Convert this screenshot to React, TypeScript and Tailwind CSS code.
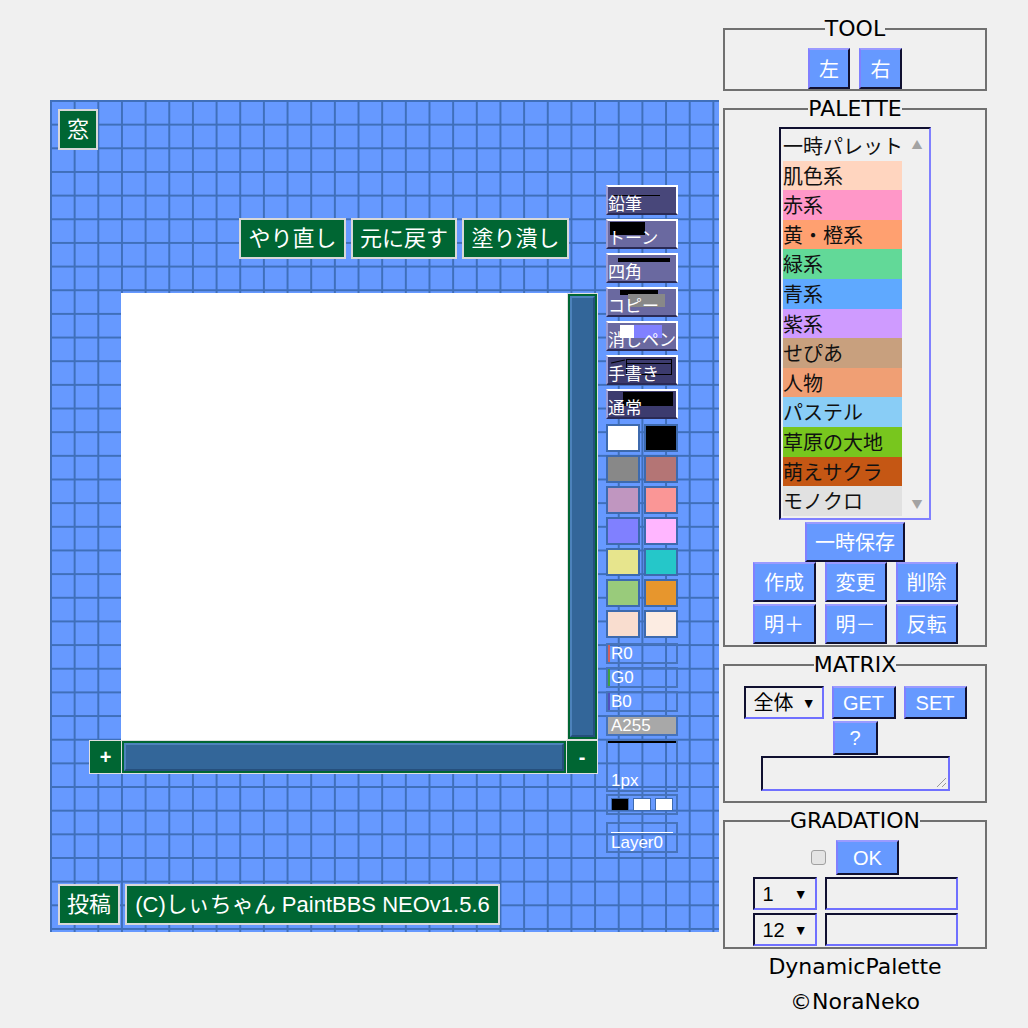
import React from 'react';

const swatches: [string, string][] = [
  ['#ffffff', '#000000'],
  ['#888888', '#b47575'],
  ['#c096c0', '#fa9696'],
  ['#8080ff', '#ffb6ff'],
  ['#e7e58d', '#25c7c9'],
  ['#99cb7b', '#e7962d'],
  ['#f9ddcf', '#fcece2'],
];

const palettes: { name: string; bg: string }[] = [
  { name: '肌色系', bg: '#ffd5bf' },
  { name: '赤系', bg: '#ff97c8' },
  { name: '黄・橙系', bg: '#ffa070' },
  { name: '緑系', bg: '#62d998' },
  { name: '青系', bg: '#5fa9ff' },
  { name: '紫系', bg: '#cf9bff' },
  { name: 'せぴあ', bg: '#c8a07e' },
  { name: '人物', bg: '#f09f74' },
  { name: 'パステル', bg: '#89cdf6' },
  { name: '草原の大地', bg: '#78c61e' },
  { name: '萌えサクラ', bg: '#c55714' },
  { name: 'モノクロ', bg: '#e1e1e1' },
];

const greenBtn =
  'bg-[#006633] border-2 border-[#d8d8d8] text-white text-[22px] leading-none flex items-center justify-center';

const blueBtn =
  'bg-[#6699ff] text-white border-2 border-t-[#9a9aff] border-l-[#8080ff] border-r-[#101030] border-b-[#101030] flex items-center justify-center leading-none';

const field =
  'bg-[#f0f0f0] border-2 border-t-[#101030] border-l-[#101030] border-r-[#7070ff] border-b-[#7070ff]';

function ToolButton({ label, bg, children }: { label: string; bg: string; children?: React.ReactNode }) {
  return (
    <div
      className={`relative h-[30px] w-[72px] border-2 border-t-white border-r-white border-l-[#9c9cd4] border-b-[#2a2a55] flex items-end ${bg}`}
    >
      {children}
      <span className="relative text-white text-[17px] leading-none whitespace-nowrap">{label}</span>
    </div>
  );
}

function Fieldset({ title, className, children }: { title: string; className?: string; children: React.ReactNode }) {
  return (
    <fieldset className={`border-2 border-[#707070] ${className ?? ''}`}>
      <legend className="mx-auto px-0 text-[22px] leading-[26px] text-black">{title}</legend>
      {children}
    </fieldset>
  );
}

export default function App() {
  return (
    <div className="min-h-screen bg-[#f0f0f0] flex items-start pl-[50px] font-['Liberation_Sans','Noto_Sans_CJK_JP',sans-serif]">
      {/* paint area */}
      <div className="mt-[100px] w-[669px] h-[832px] flex bg-[#6699ff] bg-[linear-gradient(to_right,#3f6fba_0_2px,transparent_2px),linear-gradient(to_bottom,#3f6fba_0_2px,transparent_2px)] bg-[length:23.67px_23.67px]">
        <div className="w-[556px] flex flex-col">
          <div className="pt-[9px] pl-[8px]">
            <div className={`${greenBtn} w-[40px] h-[41px]`}>窓</div>
          </div>

          <div className="mt-[68px] flex justify-end gap-[5px] pr-[37px]">
            <div className={`${greenBtn} w-[107px] h-[41px]`}>やり直し</div>
            <div className={`${greenBtn} w-[106px] h-[41px]`}>元に戻す</div>
            <div className={`${greenBtn} w-[107px] h-[41px]`}>塗り潰し</div>
          </div>

          {/* canvas + scrollbars */}
          <div className="mt-[34px] ml-[39px] w-[509px] flex flex-col">
            <div className="flex">
              <div className="w-[32px]" />
              <div className="w-[446px] h-[447px] bg-white" />
              <div className="w-[31px] h-[447px] border border-[#e0e0e0] bg-[#006633] p-[2px]">
                <div className="h-full bg-[#336699] border-2 border-t-[#4d82bb] border-l-[#4d82bb] border-r-[#264f7c] border-b-[#264f7c]" />
              </div>
            </div>
            <div className="flex h-[34px] border border-[#e0e0e0] bg-[#006633]">
              <div className="w-[31px] flex items-center justify-center text-white text-[20px] font-bold leading-none">+</div>
              <div className="w-[446px] border-x border-[#e0e0e0] p-[2px]">
                <div className="h-full bg-[#336699] border-2 border-t-[#4d82bb] border-l-[#4d82bb] border-r-[#264f7c] border-b-[#264f7c]" />
              </div>
              <div className="flex-1 flex items-center justify-center text-white text-[20px] font-bold leading-none">-</div>
            </div>
          </div>

          <div className="mt-auto mb-[7px] pl-[8px] flex gap-[5px]">
            <div className={`${greenBtn} w-[62px] h-[41px]`}>投稿</div>
            <div className={`${greenBtn} w-[375px] h-[41px]`}>(C)しぃちゃん PaintBBS NEOv1.5.6</div>
          </div>
        </div>

        {/* tools */}
        <div className="pt-[85px] w-[72px] flex flex-col">
          <div className="flex flex-col gap-[4px]">
            <ToolButton label="鉛筆" bg="bg-[#48477a]">
              <div className="absolute left-[4px] top-[8px] w-[48px] h-[1px] bg-black" />
            </ToolButton>
            <ToolButton label="トーン" bg="bg-[#6a69a0]">
              <div className="absolute left-[2px] top-[1px] w-[35px] h-[13px] bg-black" />
            </ToolButton>
            <ToolButton label="四角" bg="bg-[#6a69a0]">
              <div className="absolute left-[10px] top-[3px] w-[52px] h-[4px] bg-black" />
            </ToolButton>
            <ToolButton label="コピー" bg="bg-[#6a69a0]">
              <div className="absolute left-[12px] top-[1px] w-[38px] h-[5px] bg-black" />
              <div className="absolute left-[20px] top-[5px] w-[37px] h-[13px] bg-[#888888]" />
            </ToolButton>
            <ToolButton label="消しペン" bg="bg-[#6a69a0]">
              <div className="absolute left-[12px] top-[2px] w-[14px] h-[13px] bg-white" />
              <div className="absolute left-[26px] top-[2px] w-[28px] h-[13px] bg-[#8080ff]" />
            </ToolButton>
            <ToolButton label="手書き" bg="bg-[#3c3b6e]">
              <div className="absolute left-[3px] top-[4px] w-[14px] h-[1px] bg-black -rotate-12" />
              <div className="absolute left-[18px] top-[2px] w-[46px] h-[16px] border border-black" />
              <div className="absolute left-[18px] top-[6px] w-[46px] h-[1px] bg-black" />
            </ToolButton>
            <ToolButton label="通常" bg="bg-[#3c3b6e]">
              <div className="absolute left-[15px] top-[1px] w-[50px] h-[14px] bg-black" />
            </ToolButton>
          </div>

          <div className="mt-[5px] flex flex-col gap-[3px]">
            {swatches.map(([a, b], i) => (
              <div key={i} className="flex gap-[4px]">
                <div className="w-[34px] h-[28px] border-2 border-[#3d6aae]" style={{ backgroundColor: a }} />
                <div className="w-[34px] h-[28px] border-2 border-[#3d6aae]" style={{ backgroundColor: b }} />
              </div>
            ))}
          </div>

          <div className="mt-[5px] flex flex-col gap-[3px] text-white text-[17px]">
            <div className="relative h-[21px] border-2 border-[#4673bb] flex items-center">
              <div className="absolute left-0 top-0 w-[2px] h-full bg-[#d06060]" />
              <span className="pl-[3px] leading-none">R0</span>
            </div>
            <div className="relative h-[21px] border-2 border-[#4673bb] flex items-center">
              <div className="absolute left-0 top-0 w-[2px] h-full bg-[#40a040]" />
              <span className="pl-[3px] leading-none">G0</span>
            </div>
            <div className="relative h-[21px] border-2 border-[#4673bb] flex items-center">
              <div className="absolute left-0 top-0 w-[2px] h-full bg-[#5050c0]" />
              <span className="pl-[3px] leading-none">B0</span>
            </div>
            <div className="h-[21px] border-2 border-[#4673bb] bg-[#a8a8a8] flex items-center">
              <span className="pl-[3px] leading-none">A255</span>
            </div>
            <div className="h-[53px] border-2 border-[#4673bb] flex flex-col justify-between">
              <div className="h-[2px] bg-black" />
              <span className="pl-[3px] pb-[1px] leading-none">1px</span>
            </div>
          </div>
          <div className="mt-[2px] h-[21px] border-2 border-[#4673bb] flex items-center gap-[4px] pl-[3px]">
            <div className="w-[18px] h-[13px] bg-black border border-[#3d6aae]" />
            <div className="w-[18px] h-[13px] bg-white border border-[#3d6aae]" />
            <div className="w-[18px] h-[13px] bg-white border border-[#3d6aae]" />
          </div>
          <div className="mt-[7px] h-[31px] border-2 border-[#4673bb] flex flex-col justify-end text-white text-[17px]">
            <div className="mx-[3px] mb-[1px] h-[1px] bg-white" />
            <span className="pl-[3px] leading-none">Layer0</span>
          </div>
        </div>
      </div>

      {/* dynamic palette */}
      <div className="ml-[4px] mt-[16px] w-[264px] flex flex-col font-['DejaVu_Sans','Noto_Sans_CJK_JP',sans-serif]">
        <Fieldset title="TOOL" className="pt-[6px]">
          <div className="flex justify-center gap-[9px] font-['Noto_Sans_CJK_JP',sans-serif]">
            <div className={`${blueBtn} w-[42px] h-[41px] text-[20px]`}>左</div>
            <div className={`${blueBtn} w-[43px] h-[41px] text-[20px]`}>右</div>
          </div>
        </Fieldset>

        <Fieldset title="PALETTE" className="mt-[5px] pt-[5px] pb-[1px]">
          <div className="flex flex-col items-center font-['Noto_Sans_CJK_JP',sans-serif]">
            <div className="w-[152px] h-[393px] flex border-2 border-t-[#101030] border-l-[#101030] border-r-[#8080ff] border-b-[#8080ff] bg-[#f0f0f0] pl-[2px] pt-[2px]">
              <div className="w-[119px] flex flex-col text-[20px] text-[#111] leading-[29.6px] whitespace-nowrap">
                <div className="h-[29.6px]">一時パレット</div>
                {palettes.map((p) => (
                  <div key={p.name} className="h-[29.6px]" style={{ backgroundColor: p.bg }}>
                    {p.name}
                  </div>
                ))}
              </div>
              <div className="flex-1 flex flex-col items-center justify-between py-[8px] pl-[3px] text-[11px] text-[#a3a3a3] leading-none">
                <span>▲</span>
                <span>▼</span>
              </div>
            </div>
            <div className={`${blueBtn} mt-[2px] w-[100px] h-[40px] text-[20px]`}>一時保存</div>
            <div className="flex gap-[9px] text-[20px]">
              <div className={`${blueBtn} w-[63px] h-[40px]`}>作成</div>
              <div className={`${blueBtn} w-[62px] h-[40px]`}>変更</div>
              <div className={`${blueBtn} w-[62px] h-[40px]`}>削除</div>
            </div>
            <div className="mt-[2px] flex gap-[9px] text-[20px]">
              <div className={`${blueBtn} w-[63px] h-[40px]`}>明＋</div>
              <div className={`${blueBtn} w-[62px] h-[40px]`}>明－</div>
              <div className={`${blueBtn} w-[62px] h-[40px]`}>反転</div>
            </div>
          </div>
        </Fieldset>

        <Fieldset title="MATRIX" className="mt-[5px] pt-[8px] pb-[10px]">
          <div className="flex flex-col items-center font-['Liberation_Sans','Noto_Sans_CJK_JP',sans-serif]">
            <div className="flex gap-[8px]">
              <div className={`${field} w-[80px] h-[33px] flex items-center justify-between pl-[8px] pr-[6px] text-[20px] text-black`}>
                <span className="leading-none">全体</span>
                <span className="text-[14px] leading-none">▼</span>
              </div>
              <div className={`${blueBtn} w-[64px] h-[33px] text-[20px]`}>GET</div>
              <div className={`${blueBtn} w-[63px] h-[33px] text-[20px]`}>SET</div>
            </div>
            <div className={`${blueBtn} mt-[2px] w-[45px] h-[34px] text-[20px]`}>?</div>
            <div className={`${field} relative mt-[1px] w-[189px] h-[35px]`}>
              <svg className="absolute right-[1px] bottom-[1px]" width="12" height="12" viewBox="0 0 12 12">
                <line x1="11" y1="2" x2="2" y2="11" stroke="#999" strokeWidth="1" />
                <line x1="11" y1="7" x2="7" y2="11" stroke="#999" strokeWidth="1" />
              </svg>
            </div>
          </div>
        </Fieldset>

        <Fieldset title="GRADATION" className="mt-[5px] pt-[6px] pb-[1px]">
          <div className="flex flex-col items-center font-['Liberation_Sans','Noto_Sans_CJK_JP',sans-serif]">
            <div className="flex items-center gap-[10px]">
              <div className="w-[15px] h-[15px] rounded-[3px] border border-[#a0a0a0] bg-[#e4e4e4]" />
              <div className={`${blueBtn} w-[63px] h-[35px] text-[20px]`}>OK</div>
            </div>
            <div className="mt-[2px] flex gap-[8px]">
              <div className={`${field} w-[64px] h-[33px] flex items-center justify-between pl-[8px] pr-[7px] text-[20px] text-black`}>
                <span className="leading-none">1</span>
                <span className="text-[14px] leading-none">▼</span>
              </div>
              <div className={`${field} w-[133px] h-[33px]`} />
            </div>
            <div className="mt-[3px] flex gap-[8px]">
              <div className={`${field} w-[64px] h-[33px] flex items-center justify-between pl-[8px] pr-[7px] text-[20px] text-black`}>
                <span className="leading-none">12</span>
                <span className="text-[14px] leading-none">▼</span>
              </div>
              <div className={`${field} w-[133px] h-[33px]`} />
            </div>
          </div>
        </Fieldset>

        <div className="text-center text-[22px] leading-[35px] text-black">
          <div>DynamicPalette</div>
          <div>©NoraNeko</div>
        </div>
      </div>
    </div>
  );
}
